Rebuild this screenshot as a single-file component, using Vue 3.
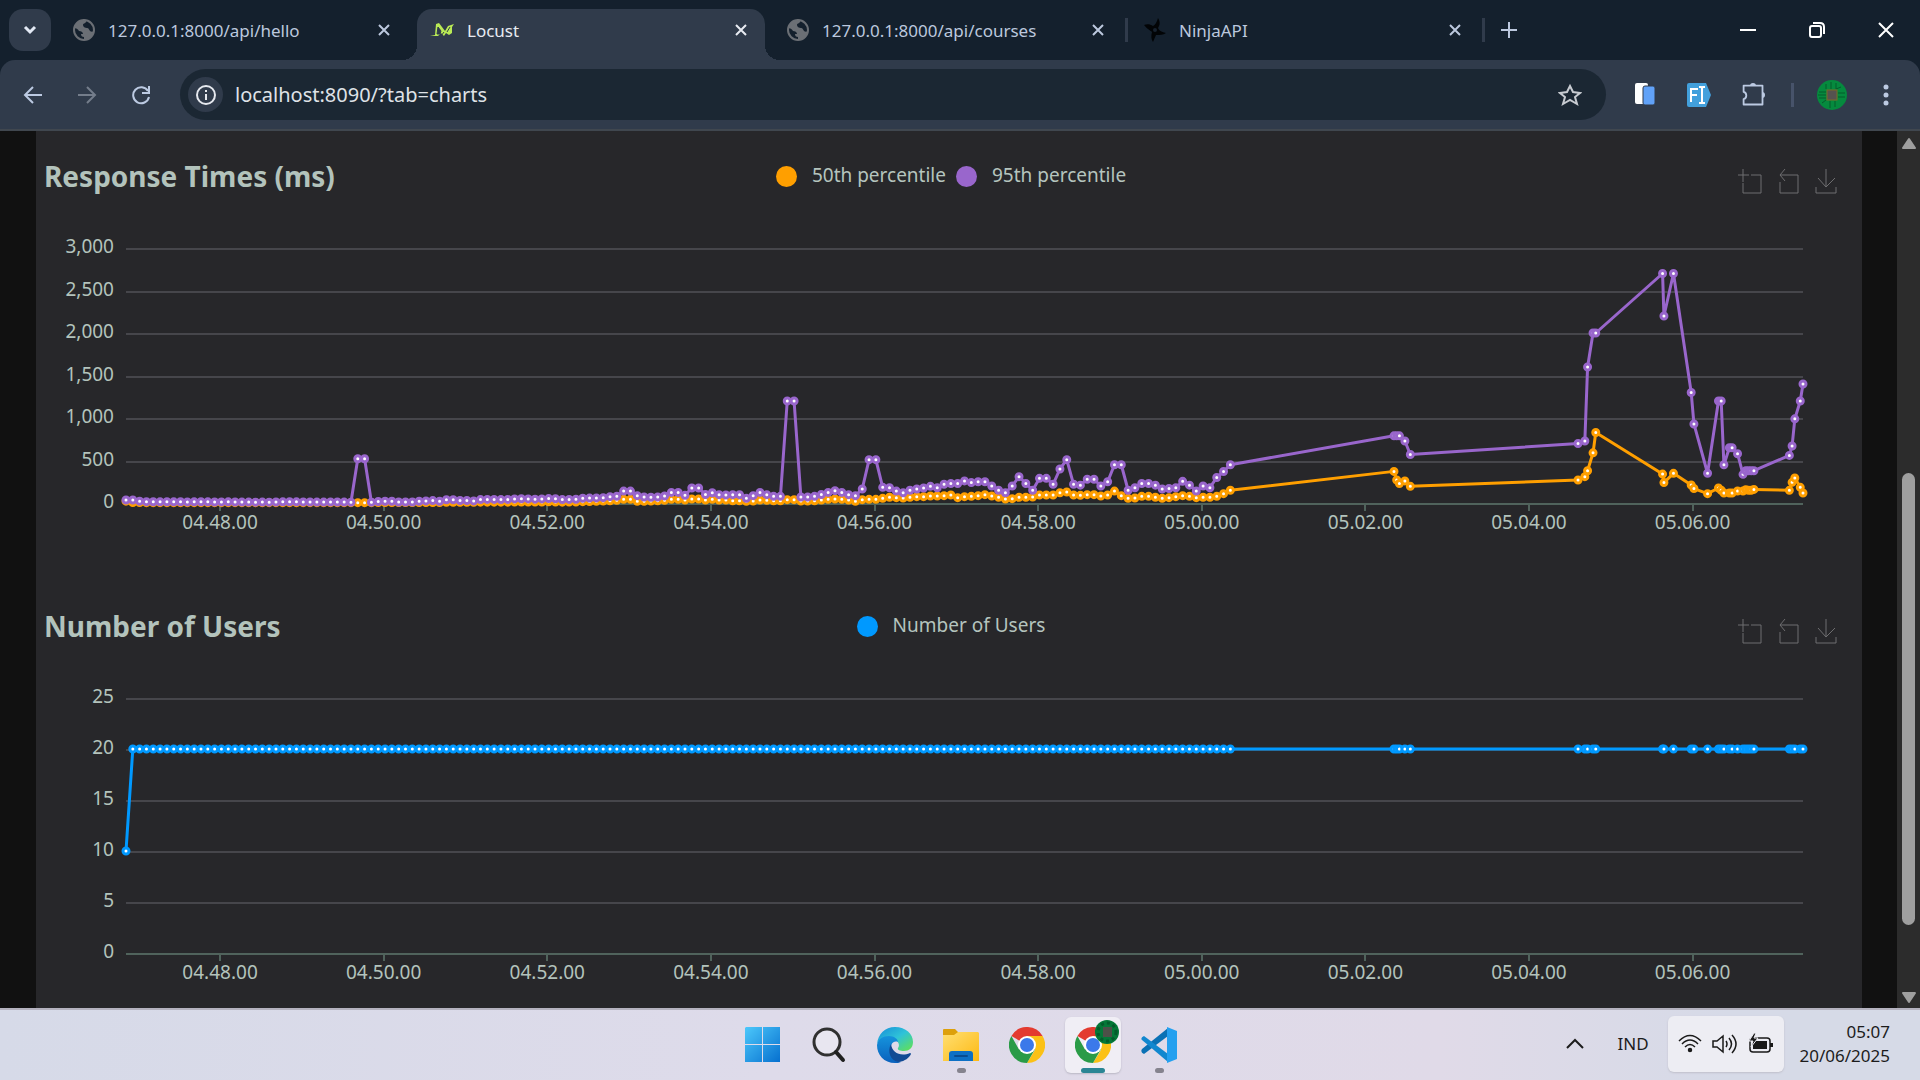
<script setup>
import { ref, computed, onMounted, onBeforeUnmount } from 'vue'

const tabs = [
  { title: '127.0.0.1:8000/api/hello', icon: 'globe' },
  { title: 'Locust', icon: 'locust', active: true },
  { title: '127.0.0.1:8000/api/courses', icon: 'globe', divider: true },
  { title: 'NinjaAPI', icon: 'ninja', divider: true }
]

const address = ref('localhost:8090/?tab=charts')

// One sample every five seconds for the steady part of the run
const steady95 = [
  35, 35, 22, 16, 15, 14, 15, 14, 15, 13, 14, 15, 14, 12, 13, 14, 12, 11, 11, 10, 11, 10, 12, 14, 15, 14, 13, 12, 11, 11, 12, 12, 11, 10,
  520, 520, 10, 17, 20, 20, 12, 12, 12, 20, 25, 28, 20, 38, 38, 30, 30, 25, 40, 42, 42, 40, 42, 48, 50, 48, 45, 48, 52, 50, 40, 42, 44, 56, 58, 60,
  63, 75, 80, 140, 140, 86, 71, 67, 71, 82, 125, 125, 90, 176, 176, 100, 120, 98, 94, 98, 98, 55, 86, 125, 98, 78, 78, 1200, 1200,
  71, 71, 78, 100, 125, 145, 125, 98, 86, 165, 510, 510, 184, 180, 140, 120, 150, 165, 176, 196, 180, 220, 230, 230, 260, 240, 250, 250,
  200, 150, 120, 200, 310, 230, 150, 290, 290, 220, 400, 510, 220, 210, 280, 280, 200, 250, 450, 450, 150, 180, 230, 230, 210, 165, 170,
  180, 255, 210, 140, 200, 180, 300, 370, 450
]
const steady50 = [
  22, 5, 5, 4, 4, 4, 4, 4, 4, 4, 4, 4, 4, 4, 4, 4, 4, 4, 4, 4, 4, 4, 4, 4, 4, 4, 4, 4, 4, 4, 4, 4, 4, 4,
  4, 4, 4, 5, 5, 5, 5, 5, 5, 5, 6, 6, 6, 8, 8, 8, 8, 8, 10, 10, 10, 10, 10, 12, 12, 12, 12, 12, 14, 12, 10, 12, 12, 16, 18, 20,
  24, 27, 31, 43, 43, 20, 20, 24, 27, 31, 43, 43, 35, 47, 47, 35, 43, 35, 35, 27, 27, 20, 24, 35, 31, 27, 27, 39, 39,
  24, 24, 27, 35, 43, 47, 43, 35, 20, 39, 43, 43, 55, 67, 63, 59, 67, 75, 75, 82, 82, 86, 94, 63, 75, 78, 86, 98,
  82, 67, 47, 51, 67, 67, 71, 94, 94, 94, 120, 130, 94, 90, 98, 98, 82, 94, 140, 86, 55, 59, 78, 78, 67, 55, 63,
  75, 86, 78, 63, 67, 67, 78, 110, 150
]
// [seconds, 50th, 95th]
const late = [
  [930, 372, 790], [932, 270, 790], [934, 230, 790], [938, 260, 730], [942, 196, 570], [1065, 270, 700],
  [1070, 310, 730], [1072, 380, 1600], [1076, 590, 2000], [1078, 830, 2000], [1127, 340, 2700], [1128, 240, 2200],
  [1135, 349, 2700], [1148, 212, 1300], [1150, 170, 930], [1160, 110, 350], [1168, 176, 1200], [1170, 150, 1200],
  [1172, 118, 450], [1176, 118, 650], [1178, 118, 650], [1182, 141, 580], [1186, 141, 337], [1188, 157, 380],
  [1190, 150, 380], [1192, 150, 380], [1194, 160, 380], [1220, 149, 560], [1222, 243, 670], [1224, 294, 990],
  [1228, 184, 1200], [1230, 118, 1400]
]
const span = 1230

const p50 = [...steady50.map((v, i) => [i * 5, v]), ...late.map(r => [r[0], r[1]])]
const p95 = [...steady95.map((v, i) => [i * 5, v]), ...late.map(r => [r[0], r[2]])]
const users = p50.map((p, i) => [p[0], i === 0 ? 10 : 20])

const charts = [
  {
    title: 'Response Times (ms)', max: 3000, step: 500,
    series: [
      { name: '50th percentile', color: '#ff9f00', points: p50 },
      { name: '95th percentile', color: '#9966cc', points: p95 }
    ]
  },
  {
    title: 'Number of Users', max: 25, step: 5,
    series: [{ name: 'Number of Users', color: '#0099ff', points: users }]
  }
]

const times = ['04.48.00', '04.50.00', '04.52.00', '04.54.00', '04.56.00', '04.58.00', '05.00.00', '05.02.00', '05.04.00', '05.06.00']
const ticks = times.map((label, i) => ({ label, t: 69 + i * 120 }))

const card = ref(null)
const width = ref(1826)
const left = 90
const right = computed(() => width.value - 59)
const top = 27
const bottom = 282
const sx = t => left + (t / span) * (right.value - left)
const sy = (v, max) => bottom - (v / max) * (bottom - top)
const gridY = (v, max) => Math.round(sy(v, max)) + 1
const line = (s, max) => s.points.map(p => sx(p[0]) + ',' + sy(p[1], max)).join(' ')
const levels = c => Array.from({ length: c.max / c.step + 1 }, (_, i) => i * c.step)

let observer
onMounted(() => {
  observer = new ResizeObserver(() => { width.value = card.value.clientWidth })
  observer.observe(card.value)
})
onBeforeUnmount(() => observer.disconnect())

const apps = ['Start', 'Search', 'Edge', 'Explorer', 'Chrome', 'Chrome profile', 'Code']
</script>

<template>
  <div class="screen">
    <header class="strip">
      <button class="tab-search" aria-label="Search tabs">
        <svg width="14" height="10" viewBox="0 0 14 10"><path d="M2 2l5 5 5-5" fill="none" stroke="#e3e9f5" stroke-width="3" /></svg>
      </button>
      <div class="tabs">
        <div v-for="tab in tabs" :key="tab.title" class="tab" :class="{ active: tab.active, divider: tab.divider }">
          <div class="tab-body">
            <svg v-if="tab.icon === 'globe'" width="22" height="22" viewBox="0 0 22 22">
              <circle cx="11" cy="11" r="10" fill="#14202d" stroke="#6b6f75" stroke-width="2" />
              <path d="M10 1C5 1 2 5 1 9c2 0 4 1 5 3 2 0 4 1 4 3H8c0 2 1 3 3 3v3c5 0 9-4 10-9-1 1-3 1-4 0s-1-3-3-3-4-1-4-3 2-1 3-3-1-3-3-3z" fill="#6b6f75" />
            </svg>
            <svg v-else-if="tab.icon === 'locust'" width="24" height="22" viewBox="0 0 24 22">
              <path d="M0 17l5-1 1-11 3-1 6 8 3-5 6-2-2 3v6l-3 2-3-2-2 3-3-3-3 3H0z" fill="#b9ea55" />
              <path d="M8 8l-1 7h3l1-3zM14 13l-3 4M15 9l-2-4M20 8l-3 5" fill="#303b4b" stroke="#303b4b" stroke-width="1" />
            </svg>
            <svg v-else width="22" height="24" viewBox="0 0 22 24">
              <path d="M14 0c2 3 2 6 1 8l-1 2c1 3 4 4 8 5-3 2-6 2-10 2-1 2-2 5-3 7-2-3-2-6-1-10C6 12 3 11 0 7c3-1 6-1 9 1 2-1 4-4 5-8z" fill="#020406" />
              <circle cx="11" cy="12" r="2" fill="#17222f" />
            </svg>
            <span class="tab-title">{{ tab.title }}</span>
            <button class="tab-close" :aria-label="'Close ' + tab.title">
              <svg width="14" height="14" viewBox="0 0 14 14"><path d="M2 2l10 10M12 2L2 12" stroke="currentColor" stroke-width="2" /></svg>
            </button>
          </div>
        </div>
      </div>
      <button class="new-tab" aria-label="New tab">
        <svg width="16" height="16" viewBox="0 0 16 16"><path d="M8 0v16M0 8h16" stroke="#bcc8de" stroke-width="2" /></svg>
      </button>
      <div class="window-buttons">
        <button aria-label="Minimise"><svg width="16" height="16" viewBox="0 0 16 16"><path d="M0 8h16" stroke="#fff" stroke-width="2" /></svg></button>
        <button aria-label="Restore">
          <svg width="16" height="16" viewBox="0 0 16 16" fill="none" stroke="#fff" stroke-width="2"><rect x="1" y="4" width="11" height="11" rx="2" /><path d="M4 1h7q4 0 4 4v7" /></svg>
        </button>
        <button aria-label="Close window"><svg width="16" height="16" viewBox="0 0 16 16"><path d="M1 1l14 14M15 1L1 15" stroke="#fff" stroke-width="2" /></svg></button>
      </div>
    </header>

    <div class="strip-floor">
      <nav class="toolbar">
        <button class="cell" aria-label="Back"><svg width="20" height="20" viewBox="0 0 20 20"><path d="M19 10H3M10 2L2 10l8 8" fill="none" stroke="#bccae2" stroke-width="2" /></svg></button>
        <button class="cell" aria-label="Forward"><svg width="20" height="20" viewBox="0 0 20 20"><path d="M1 10h16M10 2l8 8-8 8" fill="none" stroke="#747d8b" stroke-width="2" /></svg></button>
        <button class="cell" aria-label="Reload"><svg width="20" height="20" viewBox="0 0 20 20"><path d="M17 6a8 8 0 1 0 1 6M18 1v7h-7" fill="none" stroke="#bccae2" stroke-width="2" /></svg></button>
        <div class="omnibox">
          <button class="site-info" aria-label="Site information">
            <svg width="20" height="20" viewBox="0 0 20 20"><circle cx="10" cy="10" r="9" fill="none" stroke="#e6e9ef" stroke-width="2" /><path d="M10 9v6M10 5v2" stroke="#e6e9ef" stroke-width="2" /></svg>
          </button>
          <input v-model="address" class="address" type="text" aria-label="Address" />
          <button class="star" aria-label="Bookmark">
            <svg width="24" height="24" viewBox="0 0 24 24"><path d="M12 3l3 6 7 1-5 4 2 7-7-4-7 4 2-7-5-4 7-1z" fill="none" stroke="#c7cbd1" stroke-width="2" /></svg>
          </button>
        </div>
        <button class="cell" aria-label="Copy extension">
          <svg width="20" height="24" viewBox="0 0 20 24"><rect x="0" y="0" width="13" height="21" rx="2" fill="#fff" /><rect x="8" y="3" width="12" height="19" rx="2" fill="#61a2f8" stroke="#303b4b" stroke-width="1" /></svg>
        </button>
        <button class="cell" aria-label="Form extension">
          <svg width="26" height="26" viewBox="0 0 26 26"><path d="M3 1h17l5 12-5 12H3q-2 0-2-2V3q0-2 2-2z" fill="#42a0dc" /><path d="M5 20V7h7M5 13h6M13 5h2l1 1 1-1h2M16 6v14M13 21h2l1-1 1 1h2" fill="none" stroke="#fff" stroke-width="2" /></svg>
        </button>
        <button class="cell" aria-label="Extensions">
          <svg width="26" height="26" viewBox="0 0 26 26"><path d="M4 4h21v21H4v-6c4-1 4-7 0-8z" fill="none" stroke="#bccae2" stroke-width="2" stroke-linejoin="round" transform="scale(.9)" /><path d="M10 4a3 3 0 0 1 6 0zM22 10a3 3 0 0 1 0 6z" fill="#bccae2" /></svg>
        </button>
        <span class="bar-divider"></span>
        <button class="cell" aria-label="Profile">
          <svg width="30" height="30" viewBox="0 0 30 30"><circle cx="15" cy="15" r="15" fill="#058a3e" /><path d="M2 12h7M1 15h8M2 18h7M9 4v5M14 2v7M19 3v6l5-2M21 13h7M21 17h7M18 21v6M13 21v7M9 20l-4 3" stroke="#045c2b" fill="none" stroke-width="1" /><rect x="10" y="10" width="10" height="10" fill="#56524f" stroke="#7a6a26" stroke-width="1" /></svg>
        </button>
        <button class="cell" aria-label="Menu">
          <svg width="6" height="22" viewBox="0 0 6 22" fill="#bccae2"><circle cx="3" cy="3" r="2.500" /><circle cx="3" cy="11" r="2.500" /><circle cx="3" cy="19" r="2.500" /></svg>
        </button>
      </nav>
    </div>

    <div class="viewport">
      <main ref="card" class="card">
        <section v-for="c in charts" :key="c.title" class="chart">
          <div class="chart-head">
            <h2>{{ c.title }}</h2>
            <div class="legend">
              <button v-for="s in c.series" :key="s.name" class="legend-item">
                <span class="dot" :style="{ background: s.color }"></span>
                <span class="legend-name">{{ s.name }}</span>
              </button>
            </div>
            <div class="tools">
              <button aria-label="Zoom area"><svg width="24" height="25" viewBox="0 0 24 25"><path d="M5 0v13M0 6h11M13 6h10v18H5V14" /></svg></button>
              <button aria-label="Restore zoom"><svg width="24" height="25" viewBox="0 0 24 25"><path d="M9 0L4 6l5 6M4 6h18v18H4V13" /></svg></button>
              <button aria-label="Download"><svg width="24" height="25" viewBox="0 0 24 25"><path d="M12 0v18M4 9l8 9 9-9M2 18v6h20v-6" /></svg></button>
            </div>
          </div>
          <svg class="plot" :width="width" height="360">
            <g v-for="v in levels(c)" :key="v">
              <line :x1="left" :x2="right" :y1="gridY(v, c.max)" :y2="gridY(v, c.max)" :class="v ? 'grid' : 'axis'" />
              <text x="78" :y="gridY(v, c.max) + 4" class="y-label">{{ v.toLocaleString('en-US') }}</text>
            </g>
            <g v-for="k in ticks" :key="k.label">
              <line :x1="Math.round(sx(k.t))" :x2="Math.round(sx(k.t))" y1="284" y2="290" class="axis" />
              <text :x="sx(k.t)" y="308" class="x-label">{{ k.label }}</text>
            </g>
            <g v-for="s in c.series" :key="s.name" :stroke="s.color" stroke-width="3">
              <polyline :points="line(s, c.max)" fill="none" stroke-linejoin="bevel" />
              <circle v-for="(p, i) in s.points" :key="i" :cx="sx(p[0])" :cy="sy(p[1], c.max)" r="3" fill="#fff" />
            </g>
          </svg>
        </section>
      </main>
      <div class="scrollbar">
        <svg width="16" height="12" viewBox="0 0 16 12"><path d="M8 2l6 9H2z" fill="#9f9f9f" stroke="#9f9f9f" stroke-width="2" stroke-linejoin="round" /></svg>
        <div class="track"><div class="thumb"></div></div>
        <svg width="16" height="12" viewBox="0 0 16 12"><path d="M8 10l6-9H2z" fill="#9f9f9f" stroke="#9f9f9f" stroke-width="2" stroke-linejoin="round" /></svg>
      </div>
    </div>

    <footer class="taskbar">
      <div class="apps">
        <button v-for="app in apps" :key="app" class="app" :class="{ current: app === 'Chrome profile' }" :aria-label="app">
          <svg v-if="app === 'Start'" width="36" height="36" viewBox="0 0 36 36">
            <defs><linearGradient id="win" x1="0" y1="0" x2="1" y2="1"><stop offset="0" stop-color="#4cc8fb" /><stop offset="1" stop-color="#0670cf" /></linearGradient></defs>
            <path d="M1 0h16v17H0V1zM18 0h17v17H18zM0 18h17v17H0zM18 18h17v17H18z" fill="url(#win)" />
          </svg>
          <svg v-else-if="app === 'Search'" width="36" height="36" viewBox="0 0 36 36"><circle cx="16" cy="15" r="13" fill="#e8e6f0" stroke="#303030" stroke-width="3" /><path d="M25 25l7 8" stroke="#202020" stroke-width="4" stroke-linecap="round" /></svg>
          <svg v-else-if="app === 'Edge'" width="36" height="36" viewBox="0 0 36 36">
            <defs>
              <linearGradient id="e1" x1="0" y1="0" x2="1" y2="1"><stop offset="0" stop-color="#168bd9" /><stop offset=".5" stop-color="#2fc3d8" /><stop offset="1" stop-color="#66e34a" /></linearGradient>
              <linearGradient id="e2" x1="0" y1="0" x2="0" y2="1"><stop offset="0" stop-color="#1593dc" /><stop offset="1" stop-color="#0a61bd" /></linearGradient>
            </defs>
            <path d="M0 17C1 7 8 0 18 0c11 0 18 7 18 15 0 6-4 9-9 9-4 0-7-1-6-3 2-2 1-7-4-9-7-3-15 0-17 5z" fill="url(#e1)" />
            <path d="M0 18c1-6 6-9 12-9 5 0 9 3 9 6-5-2-8 3-7 8 1 6 5 11 10 12-2 1-4 1-6 1C7 36 0 28 0 18z" fill="url(#e2)" />
            <path d="M14 17c-4 7-1 17 8 18 6-1 10-4 12-8 0-1-1-1-1-1-9 4-18 0-19-9z" fill="#114a94" />
          </svg>
          <svg v-else-if="app === 'Explorer'" width="36" height="36" viewBox="0 0 36 36">
            <defs><linearGradient id="fold" x1="0" y1="0" x2="1" y2="1"><stop offset="0" stop-color="#ffdf72" /><stop offset="1" stop-color="#fdb913" /></linearGradient></defs>
            <path d="M0 3q0-1 1-1h11l3 3h20v6H0z" fill="#dda00b" />
            <path d="M0 8h11l4-3h20l1 1v28H0z" fill="url(#fold)" />
            <path d="M6 34v-7q0-3 3-3h18q3 0 3 3v7z" fill="#0d70c5" /><path d="M12 29h12" stroke="#084c91" stroke-width="2" stroke-linecap="round" />
          </svg>
          <svg v-else-if="app === 'Code'" width="36" height="36" viewBox="0 0 36 36">
            <path d="M3 27L27 9V1L1 22q-2 3 2 5z" fill="#0a71b5" /><path d="M3 9l24 18v8L1 13q-2-2 2-4z" fill="#1187cf" /><path d="M26 0l10 4v28l-10 4z" fill="#24a0ef" />
          </svg>
          <svg v-else width="36" height="36" viewBox="0 0 36 36">
            <path d="M18 18L2.400 9A18 18 0 0 1 33.600 9z" fill="#e33b30" />
            <path d="M18 18V9h15.600A18 18 0 0 1 18 36l8-13z" fill="#fbc116" />
            <path d="M18 18l-8 4.500L2.400 9A18 18 0 0 0 18 36l7.800-13.500z" fill="#2a9b47" />
            <circle cx="18" cy="18" r="9" fill="#fff" /><circle cx="18" cy="18" r="7" fill="#3b79ea" />
          </svg>
          <svg v-if="app === 'Chrome profile'" class="badge" width="26" height="26" viewBox="0 0 26 26"><circle cx="13" cy="13" r="12" fill="#047838" /><circle cx="13" cy="13" r="9" fill="none" stroke="#035c2b" stroke-width="3" stroke-dasharray="3 3" /><rect x="9" y="8" width="9" height="10" fill="#4c5048" /></svg>
          <span v-if="['Explorer', 'Chrome profile', 'Code'].includes(app)" class="running"></span>
        </button>
      </div>
      <div class="tray">
        <button class="chevron" aria-label="Hidden icons"><svg width="18" height="12" viewBox="0 0 18 12"><path d="M1 10l8-8 8 8" fill="none" stroke="#1c1c1c" stroke-width="2" /></svg></button>
        <button class="lang">IND</button>
        <button class="status" aria-label="Quick settings">
          <svg width="24" height="20" viewBox="0 0 24 20" fill="none" stroke="#1a1a1a" stroke-width="1.500"><path d="M1 7q11-11 22 0M4 10q8-8 16 0M7 13q5-5 10 0" /><circle cx="12" cy="16" r="1.500" fill="#1a1a1a" /></svg>
          <svg width="26" height="20" viewBox="0 0 26 20" fill="none" stroke="#1a1a1a" stroke-width="1.500"><path d="M1 7h4l6-5v16l-6-5H1zM14 7q2 3 0 6M17 4q5 6 0 12M20 1q8 9 0 18" /></svg>
          <svg width="26" height="22" viewBox="0 0 26 22"><rect x="2" y="5" width="20" height="14" rx="3" fill="none" stroke="#1a1a1a" stroke-width="1.500" /><path d="M5 8h14v8H5zM22 10h3v4h-3z" fill="#1a1a1a" /><path d="M6 0L1 8h4l-2 6 7-9H6l2-5z" fill="#1a1a1a" stroke="#ededf3" stroke-width="1" /></svg>
        </button>
        <div class="clock"><span>05:07</span><span>20/06/2025</span></div>
      </div>
    </footer>
  </div>
</template>

<style>
body { margin: 0; background: #111; }
</style>

<style scoped>
.screen {
  display: flex;
  flex-direction: column;
  height: 100vh;
  overflow: hidden;
  font-family: "Noto Sans", "Open Sans", sans-serif;
}
button {
  padding: 0;
  border: 0;
  background: none;
  color: inherit;
  font: inherit;
}
svg { display: block; flex: none; }

.strip {
  display: flex;
  align-items: center;
  flex: none;
  height: 60px;
  background: #14202d;
}
.tab-search {
  display: grid;
  place-items: center;
  width: 42px;
  height: 42px;
  margin: 0 9px;
  border-radius: 14px;
  background: #303b4b;
}
.tabs { display: flex; flex: 0 1 1428px; align-self: stretch; min-width: 0; }
.tab {
  position: relative;
  display: flex;
  flex: 1;
  min-width: 0;
  padding-right: 9px;
  color: #bcc8de;
}
.tab-body {
  position: relative;
  display: flex;
  align-items: center;
  flex: 1;
  min-width: 0;
  height: 42px;
  margin-top: 9px;
  padding: 0 17px 0 13px;
}
.tab-body > svg { margin-right: -22px; }
.active { color: #e8ebf2; }
.active .tab-body {
  height: 51px;
  box-sizing: border-box;
  padding-bottom: 9px;
  border-radius: 15px 15px 0 0;
  background: #303b4b;
}
.active .tab-body::before, .active .tab-body::after {
  content: "";
  position: absolute;
  bottom: 0;
  width: 15px;
  height: 15px;
}
.active .tab-body::before { left: -15px; background: radial-gradient(circle at 0 0, transparent 15px, #303b4b 15px); }
.active .tab-body::after { right: -15px; background: radial-gradient(circle at 100% 0, transparent 15px, #303b4b 15px); }
.divider::after {
  content: "";
  position: absolute;
  right: 3px;
  top: 18px;
  width: 3px;
  height: 24px;
  background: #303b4b;
}
.tab-title {
  flex: 1;
  padding: 2px 0 0 35px;
  overflow: hidden;
  white-space: nowrap;
  font-size: 17px;
  line-height: 24px;
}
.new-tab { margin-left: 13px; }
.window-buttons { display: flex; margin-left: auto; }
.window-buttons button { display: grid; place-items: center; width: 69px; height: 60px; }

.strip-floor { flex: none; background: #14202d; }
.toolbar {
  display: flex;
  align-items: center;
  height: 69px;
  padding: 0 7px 0 6px;
  border-bottom: 2px solid #40474f;
  border-radius: 15px 15px 0 0;
  background: #303b4b;
}
.cell { display: grid; place-items: center; flex: none; width: 54px; height: 54px; }
.omnibox {
  display: flex;
  align-items: center;
  flex: 1;
  height: 51px;
  box-sizing: border-box;
  margin: 0 12px;
  padding: 0 24px 0 8px;
  border-radius: 26px;
  background: #1b2733;
}
.site-info { display: grid; place-items: center; width: 35px; height: 35px; border-radius: 50%; background: #303b4b; }
.address {
  flex: 1;
  min-width: 0;
  margin-left: 12px;
  padding: 0;
  border: 0;
  outline: 0;
  background: none;
  color: #dfe2e7;
  font: 20px/28px "Noto Sans", "Open Sans", sans-serif;
}
.bar-divider { width: 3px; height: 24px; margin: 0 11px; background: #47536a; }

.viewport { display: flex; flex: 1; min-height: 0; background: #111; }
.card { flex: 1; min-width: 0; margin: 0 35px 0 36px; overflow: hidden; background: #27272a; }
.chart { height: 450px; }
.chart-head {
  display: grid;
  grid-template-columns: 1fr auto 1fr;
  align-items: center;
  height: 90px;
  padding: 0 24px 0 8px;
  color: #b5c4be;
}
h2 { margin: 0; font-size: 28px; line-height: 36px; font-weight: 700; color: #b3c3bc; }
.legend { display: flex; gap: 10px; padding-left: 20px; font-size: 19px; line-height: 24px; }
.legend-item { display: flex; align-items: center; gap: 15px; }
.legend-name { padding-bottom: 3px; }
.dot { width: 21px; height: 21px; border-radius: 50%; }
.tools { display: flex; justify-content: flex-end; gap: 14px; padding-top: 10px; }
.tools path { fill: none; stroke: #6e6e70; stroke-width: 1; }
.plot { font-size: 19px; }
.plot text { fill: #b3c3bc; }
.grid { stroke: #46464b; stroke-width: 2; }
.axis { stroke: #50635c; stroke-width: 2; }
.y-label { text-anchor: end; }
.x-label { text-anchor: middle; }

.scrollbar {
  display: flex;
  flex-direction: column;
  align-items: center;
  flex: none;
  width: 23px;
  box-sizing: border-box;
  padding: 6px 0 4px;
  background: #2c2c2c;
}
.track { display: flex; flex-direction: column; flex: 1; width: 13px; }
.track::before { content: ""; flex: 324; }
.thumb { flex: 452; border-radius: 7px; background: #9f9f9f; }
.track::after { content: ""; flex: 67; }

.taskbar {
  display: grid;
  grid-template-columns: 1fr auto 1fr;
  align-items: center;
  flex: none;
  height: 70px;
  border-top: 2px solid #b4b2bf;
  background: linear-gradient(90deg, #d6dae8, #dedbea 40%, #e0dae8 75%, #d6dae7 90%);
  color: #1c1c1c;
}
.apps { display: flex; grid-column: 2; gap: 10px; padding-left: 1px; }
.app { position: relative; display: grid; place-items: center; width: 56px; height: 56px; border-radius: 6px; }
.current { background: #f0eef5; box-shadow: 0 1px 2px #b9b7c4; }
.badge { position: absolute; top: 2px; right: 1px; }
.running { position: absolute; bottom: 0; left: 50%; width: 9px; height: 5px; margin-left: -4px; border-radius: 3px; background: #85838e; }
.current .running { width: 24px; margin-left: -12px; background: #2a8594; }
.tray { display: flex; align-items: center; justify-content: flex-end; padding: 0 30px 2px 0; font-size: 17px; line-height: 24px; }
.chevron { margin-right: 33px; }
.lang { margin-right: 19px; }
.status { display: flex; align-items: center; justify-content: space-between; width: 116px; height: 56px; box-sizing: border-box; padding: 0 10px; border-radius: 6px; background: #ededf3; box-shadow: 0 1px 2px #bfbfca; }
.clock { display: flex; flex-direction: column; align-items: flex-end; margin-left: 16px; }
</style>
